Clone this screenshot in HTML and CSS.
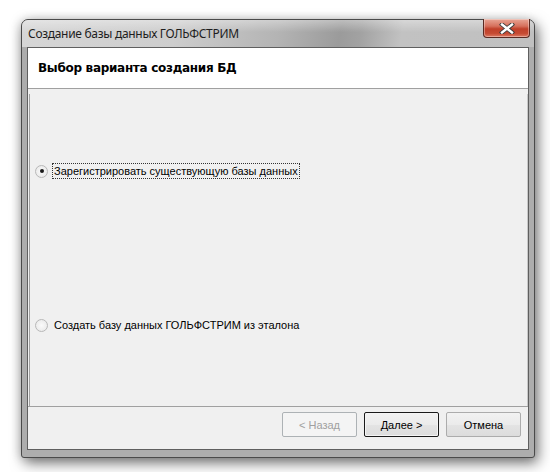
FILE: index.html
```html
<!DOCTYPE html>
<html>
<head>
<meta charset="utf-8">
<link rel="stylesheet" href="styles.css">
</head>
<body>
<div class="stage">
  <div class="window">
    <div class="titlebar">
      <span class="title">Создание базы данных ГОЛЬФСТРИМ</span>
      <span class="close">
        <svg width="16" height="11" viewBox="0 0 16 11">
          <path d="M3 1.5 L13 9.5 M13 1.5 L3 9.5" stroke="#3a3a3a" stroke-width="4.2" stroke-linecap="square"/>
          <path d="M3 1.5 L13 9.5 M13 1.5 L3 9.5" stroke="#ffffff" stroke-width="2.4" stroke-linecap="square"/>
        </svg>
      </span>
    </div>
    <div class="client">
      <div class="header">Выбор варианта создания БД</div>
      <div class="content">
        <div class="panel">
          <label class="option first">
            <span class="radio checked"></span>
            <span class="label focused">Зарегистрировать существующую базы данных</span>
          </label>
          <label class="option second">
            <span class="radio"></span>
            <span class="label">Создать базу данных ГОЛЬФСТРИМ из эталона</span>
          </label>
        </div>
      </div>
      <div class="footer">
        <button class="btn disabled">&lt; Назад</button>
        <button class="btn default">Далее &gt;</button>
        <button class="btn cancel">Отмена</button>
      </div>
    </div>
  </div>
</div>
</body>
</html>
```
FILE: styles.css
```css
html, body {
  margin: 0;
  padding: 0;
  background: #ffffff;
  width: 550px;
  height: 472px;
  overflow: hidden;
}

.stage {
  padding: 19px 0 0 21px;
}

.window {
  height: 430px;
  width: 502px;
  border: 1px solid #4a4a4a;
  border-radius: 7px 7px 3px 3px;
  background: #adadad;
  box-shadow: 3px 5px 14px rgba(0, 0, 0, 0.55), -2px 0 10px rgba(0,0,0,0.12);
  display: flex;
  flex-direction: column;
  padding: 0 5px 7px 5px;
  box-sizing: content-box;
}

.titlebar {
  height: 27px;
  flex: none;
  margin: 0 -5px;
  padding: 0 4px 0 6px;
  display: flex;
  align-items: flex-start;
  justify-content: space-between;
  border-radius: 6px 6px 0 0;
  background:
    linear-gradient(180deg, rgba(255,255,255,0.35) 0%, rgba(255,255,255,0) 45%),
    linear-gradient(100deg, #d6d6d6 0%, #cdcdcd 30%, #b4b4b4 50%, #9b9b9b 62%, #a2a2a2 66%, #c2c2c2 74%, #c0c0c0 100%);
}

.title {
  font-family: "Noto Sans", "DejaVu Sans", sans-serif;
  font-size: 12px;
  color: #1e1e1e;
  line-height: 14px;
  padding-top: 7px;
  letter-spacing: -0.3px;
}

.close {
  width: 47px;
  height: 19px;
  margin-top: -1px;
  border: 1px solid #5a2a22;
  border-top: none;
  border-radius: 0 0 4px 4px;
  background: linear-gradient(180deg, #e8a595 0%, #d6705c 40%, #c0402a 55%, #c64a32 80%, #dd7a63 100%);
  display: flex;
  align-items: center;
  justify-content: center;
  box-sizing: border-box;
  box-shadow: inset 0 0 0 1px rgba(255,255,255,0.35);
}

.client {
  flex: 1;
  border: 1px solid #5f5f5f;
  background: #f0f0f0;
  display: flex;
  flex-direction: column;
}

.header {
  height: 40px;
  flex: none;
  background: #ffffff;
  border-bottom: 1px solid #a0a0a0;
  font-family: "DejaVu Sans", sans-serif;
  font-weight: bold;
  font-size: 12px;
  color: #000;
  line-height: 40px;
  padding-left: 10px;
  letter-spacing: -0.3px;
}

.content {
  flex: 1;
  padding: 5px 0 0 1px;
  display: flex;
  border-bottom: 1px solid #a0a0a0;
}

.panel {
  flex: 1;
  border-left: 1px solid #a0a0a0;
  border-right: 1px solid #c8c8c8;
  display: flex;
  flex-direction: column;
}

.option {
  display: flex;
  align-items: center;
  font-family: "Liberation Sans", "DejaVu Sans", sans-serif;
  font-size: 11px;
  color: #000;
  padding-left: 5px;
  height: 16px;
}

.option.first {
  margin-top: 69px;
}

.option.second {
  margin-top: 138px;
}

.radio {
  width: 11px;
  height: 11px;
  border-radius: 50%;
  border: 1px solid #b8b8b8;
  background: radial-gradient(circle at 50% 50%, #fafafa 0%, #ececec 70%, #dcdcdc 100%);
  position: relative;
  margin-right: 4px;
  flex: none;
}

.radio.checked::after {
  content: "";
  position: absolute;
  left: 3.5px;
  top: 3.5px;
  width: 4px;
  height: 4px;
  border-radius: 50%;
  background: #1a1a1a;
}

.label {
  line-height: 14px;
  padding: 0 1px;
  border: 1px dotted transparent;
}

.label.focused {
  border-color: #333;
}

.footer {
  height: 42px;
  flex: none;
  box-sizing: border-box;
  display: flex;
  justify-content: flex-end;
  align-items: flex-start;
  padding: 5px 7px 0 0;
  gap: 7px;
}

.btn {
  width: 75px;
  height: 25px;
  font-family: "Liberation Sans", "DejaVu Sans", sans-serif;
  font-size: 11px;
  font-weight: normal;
  color: #000;
  border: 1px solid #acacac;
  border-radius: 2px;
  padding: 0;
  margin: 0;
}

.btn.disabled {
  color: #a0a0a0;
  background: #f4f4f4;
  border-color: #adb2b5;
}

.btn.default {
  border: 1px solid #1a1a1a;
  box-shadow: inset 0 0 0 1px #f4f4f4;
  background: linear-gradient(180deg, #f2f2f2 0%, #ebebeb 50%, #e4e4e4 51%, #dcdcdc 100%);
}

.btn.cancel {
  background: linear-gradient(180deg, #f2f2f2 0%, #ebebeb 50%, #e4e4e4 51%, #dcdcdc 100%);
}
```
